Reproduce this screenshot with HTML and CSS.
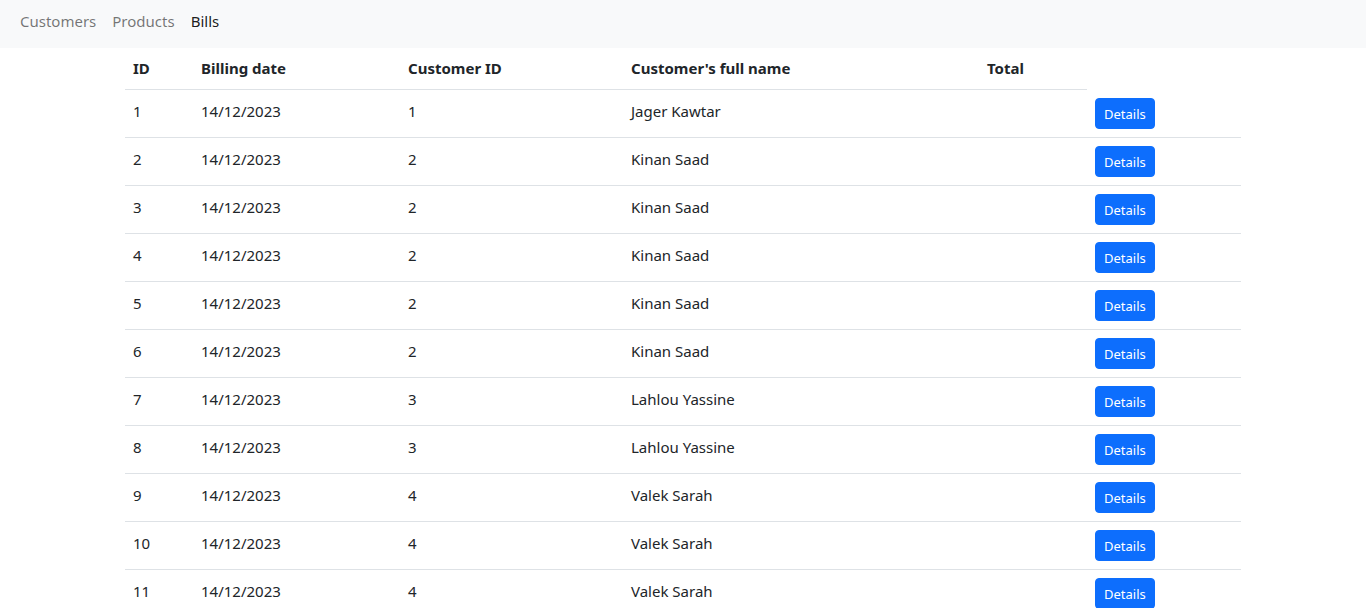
FILE: index.html
```html
<!DOCTYPE html>
<html lang="en">
<head>
<meta charset="utf-8">
<title>Bills</title>
<link rel="stylesheet" href="styles.css">
</head>
<body>
<nav class="navbar">
  <div class="nav-inner">
    <a class="nav-link" href="#">Customers</a>
    <a class="nav-link" href="#">Products</a>
    <a class="nav-link active" href="#">Bills</a>
  </div>
</nav>
<div class="container">
  <table class="table">
    <colgroup>
      <col class="c-id"><col class="c-date"><col class="c-cid"><col class="c-name"><col class="c-total"><col class="c-act">
    </colgroup>
    <thead>
      <tr><th>ID</th><th>Billing date</th><th>Customer ID</th><th>Customer's full name</th><th>Total</th></tr>
    </thead>
    <tbody>
      <tr><td>1</td><td>14/12/2023</td><td>1</td><td>Jager Kawtar</td><td></td><td class="cell-action"><button class="btn">Details</button></td></tr>
      <tr><td>2</td><td>14/12/2023</td><td>2</td><td>Kinan Saad</td><td></td><td class="cell-action"><button class="btn">Details</button></td></tr>
      <tr><td>3</td><td>14/12/2023</td><td>2</td><td>Kinan Saad</td><td></td><td class="cell-action"><button class="btn">Details</button></td></tr>
      <tr><td>4</td><td>14/12/2023</td><td>2</td><td>Kinan Saad</td><td></td><td class="cell-action"><button class="btn">Details</button></td></tr>
      <tr><td>5</td><td>14/12/2023</td><td>2</td><td>Kinan Saad</td><td></td><td class="cell-action"><button class="btn">Details</button></td></tr>
      <tr><td>6</td><td>14/12/2023</td><td>2</td><td>Kinan Saad</td><td></td><td class="cell-action"><button class="btn">Details</button></td></tr>
      <tr><td>7</td><td>14/12/2023</td><td>3</td><td>Lahlou Yassine</td><td></td><td class="cell-action"><button class="btn">Details</button></td></tr>
      <tr><td>8</td><td>14/12/2023</td><td>3</td><td>Lahlou Yassine</td><td></td><td class="cell-action"><button class="btn">Details</button></td></tr>
      <tr><td>9</td><td>14/12/2023</td><td>4</td><td>Valek Sarah</td><td></td><td class="cell-action"><button class="btn">Details</button></td></tr>
      <tr><td>10</td><td>14/12/2023</td><td>4</td><td>Valek Sarah</td><td></td><td class="cell-action"><button class="btn">Details</button></td></tr>
      <tr><td>11</td><td>14/12/2023</td><td>4</td><td>Valek Sarah</td><td></td><td class="cell-action"><button class="btn">Details</button></td></tr>
    </tbody>
  </table>
</div>
</body>
</html>
```
FILE: styles.css
```css
* { box-sizing: border-box; }
html, body { margin: 0; }
body {
  font-family: "Noto Sans", "Open Sans", sans-serif;
  font-size: 15px;
  line-height: 24px;
  color: #212529;
  background: #fff;
}
.navbar {
  background: #f8f9fa;
  height: 48px;
  margin-bottom: 1px;
}
.nav-inner {
  display: flex;
  align-items: center;
  height: 100%;
  padding: 0 12px 6px;
}
.nav-link {
  padding: 0 8px;
  color: rgba(0,0,0,.55);
  text-decoration: none;
}
.nav-link.active { color: rgba(0,0,0,.9); }
.container {
  width: 1140px;
  margin: 0 auto;
  padding: 0 12px;
}
.table {
  width: 100%;
  table-layout: fixed;
  border-collapse: collapse;
  vertical-align: top;
  margin-bottom: 16px;
}
.c-id { width: 68px; }
.c-date { width: 207px; }
.c-cid { width: 223px; }
.c-name { width: 356px; }
.c-total { width: 108px; }
.c-act { width: 154px; }
.table th, .table td {
  padding: 6px 8px 10px;
  border-bottom: 1px solid #dee2e6;
  text-align: left;
}
.table th { font-weight: 700; padding: 7px 8px 9px; }
.table td.cell-action { padding: 8px; }
.btn {
  font-family: inherit;
  font-size: 13px;
  line-height: 21px;
  padding: 5px 8px 3px;
  border: 1px solid #0d6efd;
  background: #0d6efd;
  color: #fff;
  border-radius: 4px;
  cursor: pointer;
  display: block;
}
```
